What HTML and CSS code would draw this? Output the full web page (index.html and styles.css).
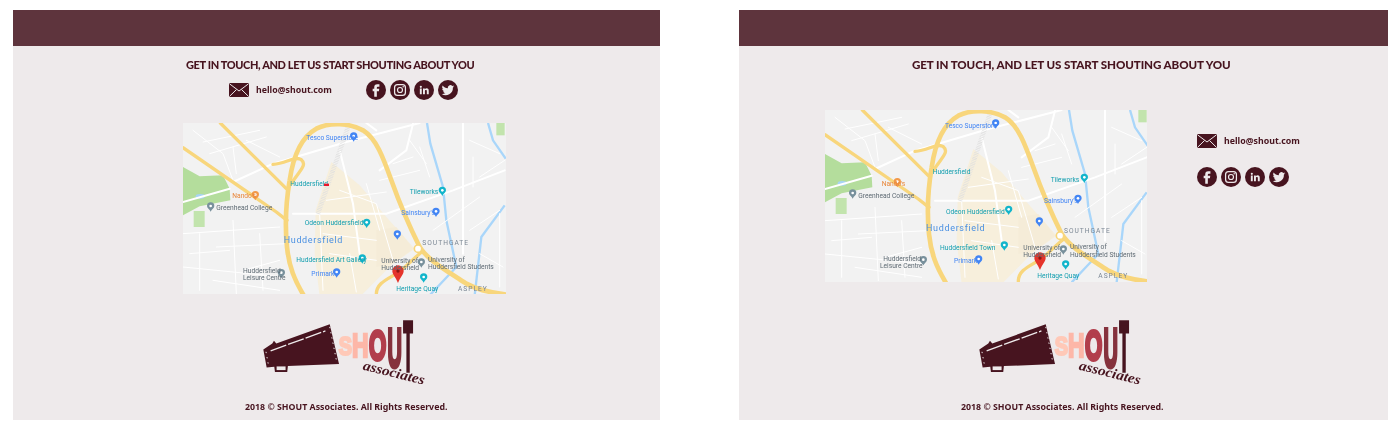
FILE: index.html
```html
<!DOCTYPE html>
<html lang="en">
<head>
<meta charset="UTF-8">
<meta name="viewport" content="width=device-width, initial-scale=1.0">
<title>Shout Associates - Contact footer</title>
<link rel="stylesheet" href="styles.css">
</head>
<body>

<!-- Shared icons and the map artwork -->
<svg class="sprites" xmlns="http://www.w3.org/2000/svg">
  <symbol id="icon-mail" viewBox="0 0 20 14">
    <rect width="20" height="14" rx="1" fill="#47141f"/>
    <path d="M0.5 0.8 10 8 19.5 0.8M0.5 13.4 7.5 6.5M19.5 13.4 12.5 6.5" fill="none" stroke="#eeeaeb" stroke-width="1"/>
  </symbol>
  <symbol id="icon-facebook" viewBox="0 0 24 24">
    <circle cx="12" cy="12" r="12" fill="#47141f"/>
    <path d="M14.2 8.2h1.9V5.2h-2.5c-2.6 0-3.700 1.600-3.700 3.600v1.600H8v3h1.900V20h3.100v-6.600h2.500l.4-3H13V9.200c0-.6.4-1 1.200-1z" fill="#eeeaeb"/>
  </symbol>
  <symbol id="icon-instagram" viewBox="0 0 24 24">
    <circle cx="12" cy="12" r="12" fill="#47141f"/>
    <rect x="5.500" y="5.500" width="13" height="13" rx="3.500" fill="none" stroke="#eeeaeb" stroke-width="1.500"/>
    <circle cx="12" cy="12" r="3" fill="none" stroke="#eeeaeb" stroke-width="1.400"/>
    <circle cx="15.800" cy="8.200" r=".9" fill="#eeeaeb"/>
  </symbol>
  <symbol id="icon-linkedin" viewBox="0 0 24 24">
    <circle cx="12" cy="12" r="12" fill="#47141f"/>
    <path d="M7 10.200h2.300V17H7zM8.200 6.900a1.300 1.300 0 110 2.600 1.300 1.300 0 010-2.600zM10.800 10.200H13v1c.5-.8 1.200-1.200 2.200-1.200 1.900 0 2.500 1.200 2.500 3.100V17h-2.300v-3.500c0-.9-.3-1.500-1.100-1.500-.9 0-1.200.6-1.200 1.500V17h-2.300z" fill="#eeeaeb"/>
  </symbol>
  <symbol id="icon-twitter" viewBox="0 0 24 24">
    <circle cx="12" cy="12" r="12" fill="#47141f"/>
    <path d="M19.500 7.500c-.6.300-1.100.4-1.800.5.600-.4 1.100-1 1.400-1.700-.6.400-1.300.6-2 .8a3.100 3.100 0 00-5.300 2.800c-2.600-.1-4.900-1.400-6.400-3.300a3.100 3.100 0 001 4.100c-.5 0-1-.2-1.400-.4 0 1.500 1.100 2.800 2.500 3.100-.5.100-.9.100-1.400 0 .4 1.200 1.500 2.100 2.900 2.200A6.300 6.300 0 014.400 16.900a8.800 8.800 0 0013.500-7.800c.6-.4 1.200-1 1.600-1.600z" fill="#eeeaeb"/>
  </symbol>

  <g id="poi">
    <path d="M0 14C-3 7-11 4-11-3A11 11 0 0111-3C11 4 3 7 0 14z"/>
    <circle cx="0" cy="-3" r="4" fill="#fff"/>
  </g>

  <g id="map-base">
    <rect x="0" y="0" width="1000" height="560" fill="#f2f2f2"/>
    <path d="M455 125 540 195 620 290 705 385 640 430 590 480 540 530H420L405 400 408 270z" fill="#f7efdc"/>
    <path d="M590 330 650 320 700 385 640 430 590 440z" fill="#f5ecd8"/>
    <path d="M10 140 60 168 130 165 150 205 152 240 60 258 10 285z" fill="#b4dd9c"/>
    <path d="M42 272H75V320H42z" fill="#c2e4ad"/>
    <path d="M950 8H975V45H950z" fill="#c2e4ad"/>
    <ellipse cx="62" cy="228" rx="14" ry="7" fill="#a6d4f5"/>
    <path d="M742 8 752 70 790 200 800 300 830 440 750 525M975 255 905 350 885 525M925 8 940 60 978 115" fill="none" stroke="#a9d6fa" stroke-width="7"/>
    <g fill="none" stroke="#ffffff" stroke-linecap="round">
      <path stroke-width="6" d="M160 185 280 130 500 65 720 8M10 245 150 205M340 280H620L820 210 975 150M850 8V400M700 10 680 90 600 150M480 90 520 250 540 400M560 8 590 30"/>
      <path stroke-width="3" d="M40 30 130 100 160 180M70 65 240 30M160 80 170 160M10 340 300 320M60 340V510M160 300 170 520M240 340 250 510M110 380 320 370M10 440 310 470M190 450 300 420M480 210 590 250 640 420M560 190 600 330M420 280 430 510M510 400 530 515M720 80 750 170M870 330 960 270M880 110V200M760 330 900 230M900 400 970 440M200 60 300 110M90 100 260 50M30 400 150 390M100 480 300 510M430 340 590 360M440 240 620 215M450 400 590 420M640 130 700 110M600 180 720 150M690 60 740 130M870 60 960 100M900 170 975 120M960 280V500"/>
    </g>
    <path d="M415 280 505 20" fill="none" stroke="#dfdfdf" stroke-width="14" stroke-dasharray="2 3"/>
    <g fill="none" stroke="#f8d67c" stroke-linejoin="round" stroke-linecap="round">
      <path stroke-width="14" d="M372 525C345 480 328 440 322 380 316 320 318 250 330 180 340 110 365 50 410 25 450 5 510 8 550 30 590 55 610 110 635 180 660 250 690 320 720 380 745 420 800 450 860 490 900 512 940 518 975 522"/>
      <path stroke-width="10" d="M122 8 320 205M10 82 290 275 322 300M280 132C320 130 345 105 365 118 385 135 355 155 335 190M590 522C590 490 620 478 650 460 680 440 700 415 730 392"/>
    </g>
    <circle cx="715" cy="385" r="11" fill="#fff" stroke="#f8d67c" stroke-width="5"/>
    <use href="#poi" x="522" y="50" fill="#4285f4"/>
    <use href="#poi" x="227" y="226" fill="#f2994a"/>
    <use href="#poi" x="93" y="260" fill="#78909c"/>
    <use href="#poi" x="788" y="213" fill="#12b5cb"/>
    <use href="#poi" x="769" y="276" fill="#4285f4"/>
    <use href="#poi" x="561" y="309" fill="#12b5cb"/>
    <use href="#poi" x="653" y="344" fill="#4285f4"/>
    <use href="#poi" x="548" y="416" fill="#12b5cb"/>
    <use href="#poi" x="471" y="458" fill="#4285f4"/>
    <use href="#poi" x="305" y="460" fill="#78909c"/>
    <use href="#poi" x="725" y="428" fill="#78909c"/>
    <use href="#poi" x="732" y="473" fill="#12b5cb"/>
    <path d="M655 488C648 470 638 462 638 452A17 17 0 01672 452C672 462 662 470 655 488z" fill="#e5342b"/>
    <circle cx="655" cy="452" r="5" fill="#8e1a14"/>
  </g>
</svg>

<!-- Stacked layout -->
<section class="panel panel--stacked">
  <div class="panel-bar"></div>
  <h2 class="panel-title">GET IN TOUCH, AND LET US START SHOUTING ABOUT YOU</h2>
  <div class="contact-row">
    <a class="mail-link" href="#"><svg class="mail-icon"><use href="#icon-mail"/></svg>hello@shout.com</a>
    <div class="social-list">
      <svg class="social-icon"><use href="#icon-facebook"/></svg>
      <svg class="social-icon"><use href="#icon-instagram"/></svg>
      <svg class="social-icon"><use href="#icon-linkedin"/></svg>
      <svg class="social-icon"><use href="#icon-twitter"/></svg>
    </div>
  </div>
  <svg class="map-image" viewBox="10 8 969 513" preserveAspectRatio="none">
    <use href="#map-base"/>
    <g class="map-labels">
      <text x="380" y="60" class="lbl-blue">Tesco Superstore</text>
      <text x="332" y="197" class="lbl-teal">Huddersfield</text>
      <rect x="433" y="190" width="15" height="7" fill="#e8152a"/>
      <text x="158" y="233" class="lbl-orange">Nando's</text>
      <text x="110" y="268" class="lbl-grey">Greenhead College</text>
      <text x="690" y="220" class="lbl-teal">Tileworks</text>
      <text x="665" y="283" class="lbl-blue">Sainsbury's</text>
      <text x="375" y="315" class="lbl-teal">Odeon Huddersfield</text>
      <text x="312" y="368" class="lbl-town">Huddersfield</text>
      <text x="728" y="375" class="lbl-area">SOUTHGATE</text>
      <text x="350" y="425" class="lbl-teal">Huddersfield Art Gallery</text>
      <text x="395" y="466" class="lbl-blue">Primark</text>
      <text x="190" y="458" class="lbl-grey">Huddersfield</text>
      <text x="190" y="480" class="lbl-grey">Leisure Centre</text>
      <text x="605" y="428" class="lbl-grey">University of</text>
      <text x="605" y="448" class="lbl-grey">Huddersfield</text>
      <text x="745" y="425" class="lbl-grey">University of</text>
      <text x="745" y="445" class="lbl-grey">Huddersfield Students</text>
      <text x="650" y="512" class="lbl-teal">Heritage Quay</text>
      <text x="835" y="512" class="lbl-area">ASPLEY</text>
    </g>
  </svg>
  <svg class="logo" viewBox="95 -10 495 247">
    <path d="M98 118 125 100 130 92 137 100 298 42 326 162 172 168 170 186 133 186 131 170 108 172z" fill="#47141f"/>
    <rect x="138" y="169" width="27" height="11" fill="#eeeaeb"/>
    <path d="M120 122 285 62" stroke="#eeeaeb" stroke-width="4" stroke-dasharray="50 6" fill="none"/>
    <path d="M298 50 320 160M106 125 114 168" stroke="#eeeaeb" stroke-width="3" stroke-dasharray="4 12" fill="none"/>
    <text transform="translate(325 135) scale(.6 .76)" class="logo-letter" fill="#ffc9b8" stroke="#ffc9b8">S</text>
    <text transform="translate(365 140) scale(.69 1)" class="logo-letter" fill="#fdb7a8" stroke="#fdb7a8">H</text>
    <text transform="translate(416 150) scale(.67 1.300)" class="logo-letter logo-letter--heavy" fill="#b23e4c" stroke="#b23e4c">O</text>
    <text transform="translate(472 170) scale(.6 1.650)" class="logo-letter logo-letter--heavy" fill="#86323d" stroke="#86323d">U</text>
    <text transform="translate(520 180) scale(.45 2.060)" class="logo-letter logo-letter--block" fill="#47141f" stroke="#47141f">T</text>
    <text transform="translate(396 178) rotate(14)" class="logo-sub" textLength="190" lengthAdjust="spacingAndGlyphs">associates</text>
  </svg>
  <p class="copyright">2018 © SHOUT Associates. All Rights Reserved.</p>
</section>

<!-- Map beside contact details -->
<section class="panel panel--split">
  <div class="panel-bar"></div>
  <h2 class="panel-title">GET IN TOUCH, AND LET US START SHOUTING ABOUT YOU</h2>
  <div class="split-row">
    <svg class="map-image" viewBox="15 30 966 516" preserveAspectRatio="none">
      <use href="#map-base" transform="translate(5 22)"/>
      <g class="map-labels">
        <text x="375" y="85" class="lbl-blue">Tesco Superstore</text>
        <text x="338" y="223" class="lbl-teal">Huddersfield</text>
        <text x="185" y="258" class="lbl-orange">Nando's</text>
        <text x="115" y="295" class="lbl-grey">Greenhead College</text>
        <text x="692" y="245" class="lbl-teal">Tileworks</text>
        <text x="672" y="309" class="lbl-blue">Sainsbury's</text>
        <text x="378" y="342" class="lbl-teal">Odeon Huddersfield</text>
        <text x="318" y="392" class="lbl-town">Huddersfield</text>
        <text x="732" y="398" class="lbl-area">SOUTHGATE</text>
        <text x="360" y="450" class="lbl-teal">Huddersfield Town</text>
        <text x="402" y="489" class="lbl-blue">Primark</text>
        <text x="190" y="482" class="lbl-grey">Huddersfield</text>
        <text x="180" y="504" class="lbl-grey">Leisure Centre</text>
        <text x="610" y="451" class="lbl-grey">University of</text>
        <text x="610" y="472" class="lbl-grey">Huddersfield</text>
        <text x="750" y="447" class="lbl-grey">University of</text>
        <text x="750" y="470" class="lbl-grey">Huddersfield Students</text>
        <text x="652" y="534" class="lbl-teal">Heritage Quay</text>
        <text x="835" y="535" class="lbl-area">ASPLEY</text>
      </g>
    </svg>
    <div class="contact-stack">
      <a class="mail-link" href="#"><svg class="mail-icon"><use href="#icon-mail"/></svg>hello@shout.com</a>
      <div class="social-list">
        <svg class="social-icon"><use href="#icon-facebook"/></svg>
        <svg class="social-icon"><use href="#icon-instagram"/></svg>
        <svg class="social-icon"><use href="#icon-linkedin"/></svg>
        <svg class="social-icon"><use href="#icon-twitter"/></svg>
      </div>
    </div>
  </div>
  <svg class="logo" viewBox="95 -10 495 247">
    <path d="M98 118 125 100 130 92 137 100 298 42 326 162 172 168 170 186 133 186 131 170 108 172z" fill="#47141f"/>
    <rect x="138" y="169" width="27" height="11" fill="#eeeaeb"/>
    <path d="M120 122 285 62" stroke="#eeeaeb" stroke-width="4" stroke-dasharray="50 6" fill="none"/>
    <path d="M298 50 320 160M106 125 114 168" stroke="#eeeaeb" stroke-width="3" stroke-dasharray="4 12" fill="none"/>
    <text transform="translate(325 135) scale(.6 .76)" class="logo-letter" fill="#ffc9b8" stroke="#ffc9b8">S</text>
    <text transform="translate(365 140) scale(.69 1)" class="logo-letter" fill="#fdb7a8" stroke="#fdb7a8">H</text>
    <text transform="translate(416 150) scale(.67 1.300)" class="logo-letter logo-letter--heavy" fill="#b23e4c" stroke="#b23e4c">O</text>
    <text transform="translate(472 170) scale(.6 1.650)" class="logo-letter logo-letter--heavy" fill="#86323d" stroke="#86323d">U</text>
    <text transform="translate(520 180) scale(.45 2.060)" class="logo-letter logo-letter--block" fill="#47141f" stroke="#47141f">T</text>
    <text transform="translate(396 178) rotate(14)" class="logo-sub" textLength="190" lengthAdjust="spacingAndGlyphs">associates</text>
  </svg>
  <p class="copyright">2018 © SHOUT Associates. All Rights Reserved.</p>
</section>

</body>
</html>
```

FILE: styles.css
```css
/* Page */
body {
    margin: 0;
    padding: 10px 12px 14px 13px;
    display: flex;
    justify-content: space-between;
    background-color: #ffffff;
    color: #47141f;
    font-family: "Noto Sans", sans-serif;
}

.sprites {
    display: none;
}

/* Panels */
.panel {
    height: 410px;
    background-color: #eeeaeb;
    overflow: hidden;
}

.panel--stacked {
    width: 647px;
}

.panel--split {
    width: 649px;
}

.panel-bar {
    height: 36px;
    background-color: #5e343d;
}

.panel-title {
    margin: 11px 0 0 173px;
    font-family: "Lato", sans-serif;
    font-size: 11px;
    font-weight: 900;
    letter-spacing: -0.38px;
    line-height: 16px;
    white-space: nowrap;
    filter: blur(0.3px);
}

.panel--split .panel-title {
    font-size: 11.6px;
    letter-spacing: -0.1px;
}

/* Contact details */
.contact-row {
    display: flex;
    align-items: center;
    gap: 34px;
    height: 20px;
    margin: 7px 0 0 216px;
}

.split-row {
    display: flex;
    gap: 50px;
    margin: 37px 0 0 86px;
}

.contact-stack {
    display: flex;
    flex-direction: column;
    gap: 19px;
    padding-top: 24px;
}

.mail-link {
    display: flex;
    align-items: center;
    gap: 7px;
    width: 103px;
    color: #47141f;
    font-size: 8.8px;
    font-weight: 700;
    text-decoration: none;
    white-space: nowrap;
    filter: blur(0.3px);
}

.mail-icon {
    width: 20px;
    height: 14px;
    flex: none;
}

.social-list {
    display: flex;
    gap: 4px;
}

.social-icon {
    width: 20px;
    height: 20px;
}

/* Map */
.map-image {
    display: block;
    width: 323px;
    height: 171px;
    filter: blur(0.6px);
}

.panel--stacked .map-image {
    margin: 23px 0 0 170px;
}

.panel--split .map-image {
    width: 322px;
    height: 172px;
}

.map-labels text {
    font-family: "Roboto", sans-serif;
    font-size: 20px;
}

.map-labels .lbl-blue {
    fill: #4285f4;
}

.map-labels .lbl-teal {
    fill: #129eaf;
}

.map-labels .lbl-orange {
    fill: #e8873a;
}

.map-labels .lbl-grey {
    fill: #5f6b74;
}

.map-labels .lbl-town {
    fill: #4a90e2;
    font-size: 27px;
    letter-spacing: 2px;
}

.map-labels .lbl-area {
    fill: #7b8794;
    letter-spacing: 3px;
}

/* Logo */
.logo {
    display: block;
    width: 165px;
    height: 82px;
    margin-top: 13px;
    margin-left: 249px;
    filter: blur(0.3px);
}

.panel--split .logo {
    margin-top: 25px;
    margin-left: 239px;
}

.logo-letter {
    font-family: "Liberation Sans", sans-serif;
    font-size: 100px;
    font-weight: 700;
    stroke-width: 2px;
    vector-effect: non-scaling-stroke;
}

.logo-letter--heavy {
    stroke-width: 3px;
}

.logo-letter--block {
    stroke-width: 4px;
}

.logo-sub {
    fill: #47141f;
    font-family: "Liberation Serif", serif;
    font-size: 42px;
    font-style: italic;
    font-weight: 700;
}

/* Copyright */
.copyright {
    margin: 12px 0 0 232px;
    font-size: 8.8px;
    font-weight: 700;
    line-height: 12px;
    white-space: nowrap;
    filter: blur(0.3px);
}

.panel--split .copyright {
    margin-left: 222px;
}
```
